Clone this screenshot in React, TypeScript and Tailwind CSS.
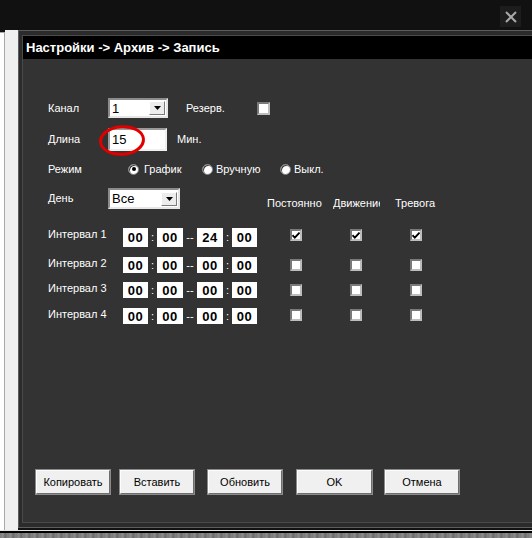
import React from "react";

const Check = ({ checked, size = 12 }: { checked?: boolean; size?: number }) => (
  <div
    className="bg-white border-2 border-t-[#7a7a7a] border-l-[#7a7a7a] border-b-[#bdbdbd] border-r-[#bdbdbd] flex items-center justify-center shrink-0"
    style={{ width: size, height: size }}
  >
    {checked && (
      <svg width="8" height="7" viewBox="0 0 8 7">
        <path d="M0.5 3.2 L2.8 5.6 L7.5 0.6" stroke="#000" strokeWidth="1.8" fill="none" />
      </svg>
    )}
  </div>
);

const Radio = ({ checked }: { checked?: boolean }) => (
  <div className="w-[11px] h-[11px] rounded-full bg-white border border-[#808080] shadow-[inset_1px_1px_0_#404040] flex items-center justify-center shrink-0">
    {checked && <div className="w-[4px] h-[4px] rounded-full bg-black" />}
  </div>
);

const Select = ({ value, w, h }: { value: string; w: number; h: number }) => (
  <div
    className="bg-white border-2 border-t-[#8c8c8c] border-l-[#8c8c8c] border-b-[#e6e6e6] border-r-[#e6e6e6] flex items-center shrink-0"
    style={{ width: w, height: h }}
  >
    <div className="flex-1 pl-[2px] text-[13px] text-black leading-none">{value}</div>
    <div className="w-[16px] h-[14px] mr-[1px] bg-[#ececec] border border-t-white border-l-white border-b-[#7a7a7a] border-r-[#7a7a7a] flex items-center justify-center">
      <svg width="7" height="4" viewBox="0 0 7 4">
        <path d="M0 0 H7 L3.5 4 Z" fill="#000" />
      </svg>
    </div>
  </div>
);

const TimeBox = ({ v, w }: { v: string; w: number }) => (
  <div
    className="bg-white flex items-center justify-center text-black font-bold text-[13px] leading-none shrink-0 tracking-[0.5px]"
    style={{ width: w }}
  >
    {v}
  </div>
);

const Sep = ({ t, w }: { t: string; w: number }) => (
  <div className="flex items-center justify-center text-white text-[11px] leading-none shrink-0" style={{ width: w }}>
    {t}
  </div>
);

const IntervalRow = ({
  n,
  end,
  h,
  mt,
  checked,
  cmt,
}: {
  n: number;
  end: string;
  h: number;
  mt: number;
  checked?: boolean;
  cmt: number;
}) => (
  <div className="flex items-start pl-[25px]" style={{ marginTop: mt }}>
    <div className="w-[75px] text-white text-[11px] leading-[13px] shrink-0">Интервал {n}</div>
    <div className="flex" style={{ height: h }}>
      <TimeBox v="00" w={25} />
      <Sep t=":" w={9} />
      <TimeBox v="00" w={26} />
      <Sep t="--" w={14} />
      <TimeBox v={end} w={26} />
      <Sep t=":" w={9} />
      <TimeBox v="00" w={25} />
    </div>
    <div className="flex" style={{ marginTop: cmt }}>
      <div className="ml-[33px]">
        <Check checked={checked} />
      </div>
      <div className="ml-[48px]">
        <Check checked={checked} />
      </div>
      <div className="ml-[48px]">
        <Check checked={checked} />
      </div>
    </div>
  </div>
);

const Btn = ({ t, w, ml }: { t: string; w: number; ml: number }) => (
  <div
    className="h-[24px] bg-[#f0f0f0] border border-t-[#fdfdfd] border-l-[#fdfdfd] border-b-[#6e6e6e] border-r-[#6e6e6e] shadow-[0_0_0_1px_#8a8a8a] flex items-center justify-center text-black text-[11px] shrink-0"
    style={{ width: w, marginLeft: ml }}
  >
    {t}
  </div>
);

export default function App() {
  return (
    <div className="w-[532px] h-[538px] bg-[#111111] flex flex-col overflow-hidden font-['Liberation_Sans',Arial,sans-serif]">
      {/* top bar */}
      <div className="h-[30px] flex justify-end items-start shrink-0">
        <div className="mt-[6px] mr-[11px] w-[21px] h-[21px] bg-[#1d1d1d] flex items-center justify-center">
          <svg width="12" height="12" viewBox="0 0 12 12">
            <path d="M1 1 L11 11 M11 1 L1 11" stroke="#a9a9a9" strokeWidth="2" />
          </svg>
        </div>
      </div>

      {/* middle */}
      <div className="h-[500px] flex shrink-0">
        <div className="w-[18px] flex shrink-0">
          <div className="w-[5px] bg-white border-t border-r border-[#a8a8a8] mt-[2px]" />
          <div className="flex-1 bg-[#efefef]" />
        </div>
        <div className="flex-1 flex flex-col mb-[2px] bg-[#2b2b2b] border-l border-t border-b border-[#5c5c5c] pl-[3px] pt-[4px] pb-[4px]">
          <div className="flex-1 flex flex-col border-l border-t border-b border-[#4a4a4a]">
            <div className="h-[23px] bg-black flex items-center pl-[3px] text-white font-bold text-[13px] shrink-0">
              Настройки -&gt; Архив -&gt; Запись
            </div>
            <div className="flex-1 bg-[#333333] flex flex-col text-white text-[11px]">
              {/* Канал */}
              <div className="mt-[39px] h-[20px] flex items-center pl-[25px]">
                <div className="w-[60px]">Канал</div>
                <Select value="1" w={60} h={20} />
                <div className="ml-[18px] w-[71px]">Резерв.</div>
                <Check size={13} />
              </div>
              {/* Длина */}
              <div className="mt-[10px] h-[23px] flex items-center pl-[25px]">
                <div className="w-[60px]">Длина</div>
                <div className="relative w-[59px] h-[23px] bg-white border-2 border-t-[#9a9a9a] border-l-[#9a9a9a] border-b-[#f0f0f0] border-r-[#f0f0f0] flex items-center">
                  <span className="pl-[2px] text-black text-[13px] leading-none">15</span>
                  <svg className="absolute left-[-12px] top-[-6px]" width="48" height="33" viewBox="0 0 48 33">
                    <ellipse cx="24" cy="16.5" rx="21.5" ry="13.8" stroke="#e00000" strokeWidth="3" fill="none" transform="rotate(-4 24 16.5)" />
                  </svg>
                </div>
                <div className="ml-[10px]">Мин.</div>
              </div>
              {/* Режим */}
              <div className="mt-[8px] h-[20px] flex items-center pl-[25px]">
                <div className="w-[80px]">Режим</div>
                <div className="w-[74px] flex items-center">
                  <Radio checked />
                  <span className="ml-[5px]">График</span>
                </div>
                <div className="w-[78px] flex items-center">
                  <Radio />
                  <span className="ml-[3px]">Вручную</span>
                </div>
                <div className="flex items-center">
                  <Radio />
                  <span className="ml-[3px]">Выкл.</span>
                </div>
              </div>
              {/* День */}
              <div className="mt-[9px] h-[21px] flex items-end pl-[25px]">
                <div className="w-[60px] self-center">День</div>
                <Select value="Все" w={72} h={21} />
                <div className="ml-[87px] flex leading-[12px] whitespace-nowrap">
                  <div className="w-[66px]">Постоянно</div>
                  <div className="w-[47px] overflow-hidden">Движение</div>
                  <div className="ml-[15px]">Тревога</div>
                </div>
              </div>
              <IntervalRow n={1} end="24" h={19} mt={19} checked cmt={1} />
              <IntervalRow n={2} end="00" h={16} mt={10} cmt={2} />
              <IntervalRow n={3} end="00" h={16} mt={9} cmt={2} />
              <IntervalRow n={4} end="00" h={16} mt={10} cmt={1} />
              {/* buttons */}
              <div className="mt-auto mb-[28px] flex pl-[13px]">
                <Btn t="Копировать" w={74} ml={0} />
                <Btn t="Вставить" w={74} ml={10} />
                <Btn t="Обновить" w={74} ml={14} />
                <Btn t="OK" w={75} ml={15} />
                <Btn t="Отмена" w={74} ml={13} />
              </div>
            </div>
          </div>
        </div>
      </div>

      {/* bottom */}
      <div className="h-[1px] bg-[#e4e4e4] shrink-0" />
      <div className="h-[2px] bg-black shrink-0" />
      <div className="flex-1 bg-[repeating-linear-gradient(90deg,#7b7b7b_0px,#8e8e8e_3px,#6a6a6a_5px,#858585_8px)]" />
    </div>
  );
}
